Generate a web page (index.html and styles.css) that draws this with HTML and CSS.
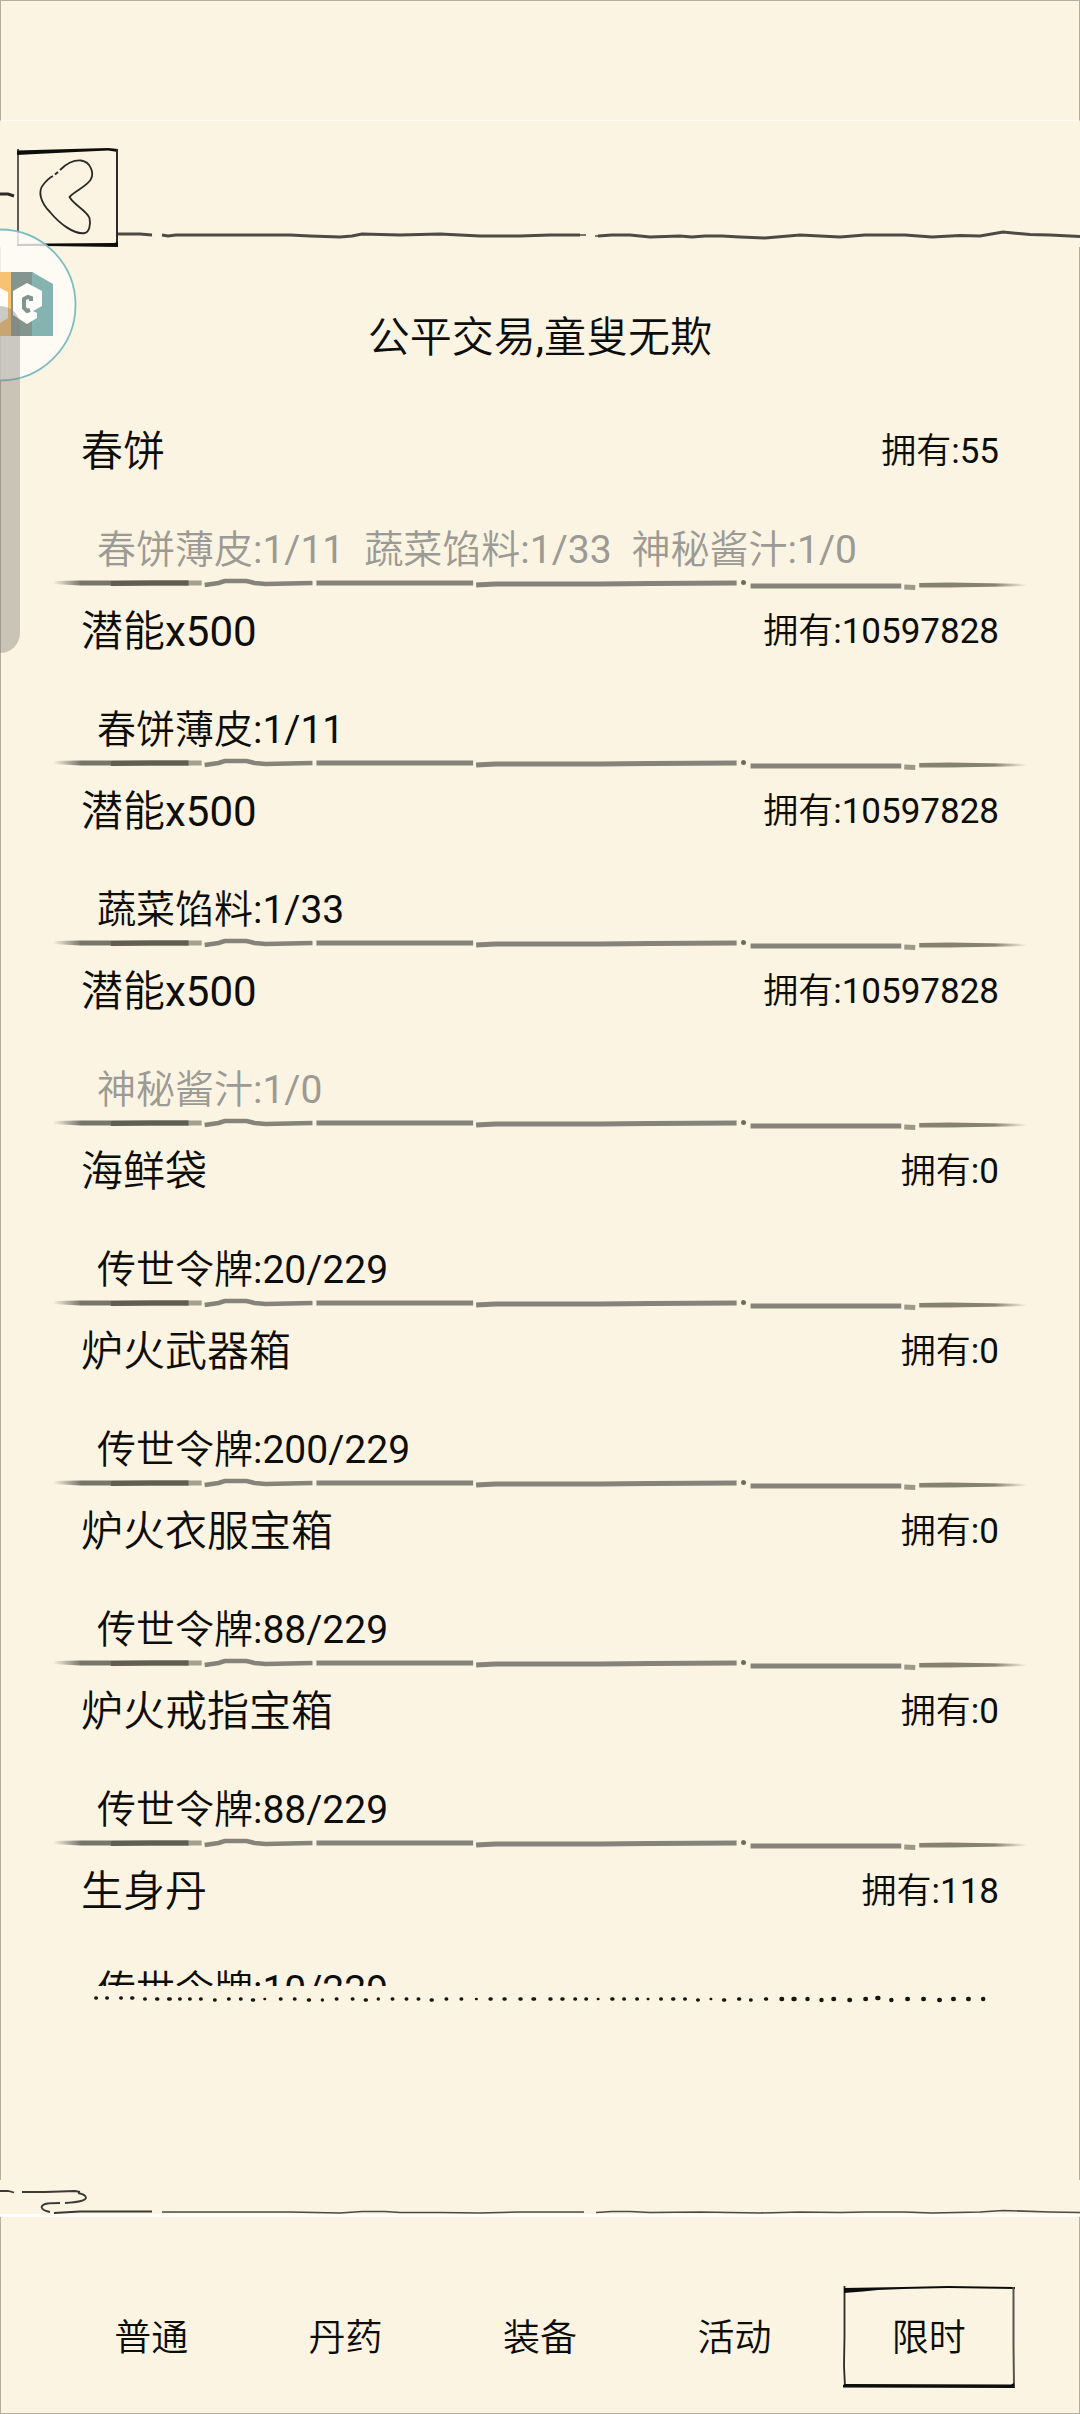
FILE: index.html
```
<!DOCTYPE html>
<html lang="zh-CN">
<head>
    <meta charset="UTF-8">
    <meta name="viewport" content="width=device-width, initial-scale=1.0">
    <title>交易</title>
    <link rel="stylesheet" href="styles.css">
</head>
<body>
    <!-- brush stroke shared by every row -->
    <svg class="defs" aria-hidden="true">
        <defs>
            <linearGradient id="fade-in" gradientUnits="userSpaceOnUse" x1="2" y1="0" x2="30" y2="0">
                <stop offset="0" stop-color="#77756a" stop-opacity="0"/>
                <stop offset="1" stop-color="#77756a"/>
            </linearGradient>
            <linearGradient id="fade-out" gradientUnits="userSpaceOnUse" x1="870" y1="0" x2="978" y2="0">
                <stop offset="0" stop-color="#85836f"/>
                <stop offset="0.7" stop-color="#85836f"/>
                <stop offset="1" stop-color="#85836f" stop-opacity="0"/>
            </linearGradient>
            <symbol id="stroke" viewBox="0 0 980 20" preserveAspectRatio="none">
                <g fill="none" stroke="#85837a" stroke-width="5">
                    <path d="M2 7L30 6.500H138V11.500H30L2 10z" fill="url(#fade-in)" stroke="none"/>
                    <path d="M60 9.500L100 9L138 9" stroke="#605e51"/>
                    <path d="M138 9H151" stroke="#a3a08d"/>
                    <path d="M154 11L168 9L174 7H196L204 9L215 10L262 9" stroke-width="4.500"/>
                    <path d="M266 9H423"/>
                    <path d="M426 11L445 10H550L600 9.500L687 9"/>
                    <path d="M701 12H852"/>
                    <path d="M855 13L866 13.500" stroke="#9c9985"/>
                    <path d="M870 9L900 8.500L978 10L978 12L900 13.500L870 13.500z" fill="url(#fade-out)" stroke="none"/>
                </g>
                <circle cx="694" cy="8.500" r="2.500" fill="#6d6b5c"/>
            </symbol>
        </defs>
    </svg>

    <div class="status-bar"></div>

    <header class="header">
        <svg class="header-stub" viewBox="0 0 16 99" aria-hidden="true">
            <path d="M0 46L8 46L14 48" fill="none" stroke="#2b2a26" stroke-width="3"/>
        </svg>
        <button class="back-btn" type="button" aria-label="返回">
            <svg viewBox="0 0 102 99" aria-hidden="true">
                <path d="M2 1L2 97" fill="none" stroke="#2b2a26" stroke-width="1.500"/>
                <path d="M1 2.500L55 1L92 0L102 1V4L92 2.500L60 4L30 5.500L1 7z" fill="#0d0d0b"/>
                <path d="M101 1L101 98" fill="none" stroke="#2b2a26" stroke-width="2"/>
                <path d="M1 96L30 95.500L98 95L102 94V99L30 98L1 98z" fill="#0d0d0b"/>
                <path d="M44 22C50 16 57 12 65 12.500C75 14 78 25 75 31C73 37 57 44 53.500 49C58 57 71 63 73.500 70C75 77 73 84 69 85C58 87 43 75 34 64C24 54 22 43 27 37C30 33 33 30 37 28" fill="none" stroke="#2b2a26" stroke-width="1.800"/>
                <path d="M39 26.500L42 24" stroke="#2b2a26" stroke-width="2"/>
            </svg>
        </button>
        <svg class="header-line" viewBox="118 0 962 99" preserveAspectRatio="none" aria-hidden="true">
            <g fill="none" stroke="#4c4b43" stroke-width="3">
                <path d="M118 86L140 86L152 87"/>
                <path d="M162 87L168 88L176 87H290L310 88L340 89L352 88L362 86L400 87L440 86L480 88L520 88L550 87H580"/>
                <path d="M578 87H586M595 88H600" stroke-width="1.500"/>
                <path d="M598 88L612 87H630L650 89L680 88L692 89L705 88H722L740 89L765 90L800 87L840 89L865 87H905L932 89L960 87.500L980 88L1003 84L1030 86.500L1050 87L1080 88.500"/>
            </g>
        </svg>
    </header>

    <main class="shop">
        <h1 class="shop-title">公平交易,童叟无欺</h1>

        <ul class="goods">
            <li class="item">
                <div class="item-head"><span class="name">春饼</span><span class="owned">拥有:55</span></div>
                <p class="cost lacking"><span>春饼薄皮:1/11</span><span>蔬菜馅料:1/33</span><span>神秘酱汁:1/0</span></p>
                <svg class="divider" aria-hidden="true"><use href="#stroke"/></svg>
            </li>
            <li class="item">
                <div class="item-head"><span class="name">潜能x500</span><span class="owned">拥有:10597828</span></div>
                <p class="cost"><span>春饼薄皮:1/11</span></p>
                <svg class="divider" aria-hidden="true"><use href="#stroke"/></svg>
            </li>
            <li class="item">
                <div class="item-head"><span class="name">潜能x500</span><span class="owned">拥有:10597828</span></div>
                <p class="cost"><span>蔬菜馅料:1/33</span></p>
                <svg class="divider" aria-hidden="true"><use href="#stroke"/></svg>
            </li>
            <li class="item">
                <div class="item-head"><span class="name">潜能x500</span><span class="owned">拥有:10597828</span></div>
                <p class="cost lacking"><span>神秘酱汁:1/0</span></p>
                <svg class="divider" aria-hidden="true"><use href="#stroke"/></svg>
            </li>
            <li class="item">
                <div class="item-head"><span class="name">海鲜袋</span><span class="owned">拥有:0</span></div>
                <p class="cost"><span>传世令牌:20/229</span></p>
                <svg class="divider" aria-hidden="true"><use href="#stroke"/></svg>
            </li>
            <li class="item">
                <div class="item-head"><span class="name">炉火武器箱</span><span class="owned">拥有:0</span></div>
                <p class="cost"><span>传世令牌:200/229</span></p>
                <svg class="divider" aria-hidden="true"><use href="#stroke"/></svg>
            </li>
            <li class="item">
                <div class="item-head"><span class="name">炉火衣服宝箱</span><span class="owned">拥有:0</span></div>
                <p class="cost"><span>传世令牌:88/229</span></p>
                <svg class="divider" aria-hidden="true"><use href="#stroke"/></svg>
            </li>
            <li class="item">
                <div class="item-head"><span class="name">炉火戒指宝箱</span><span class="owned">拥有:0</span></div>
                <p class="cost"><span>传世令牌:88/229</span></p>
                <svg class="divider" aria-hidden="true"><use href="#stroke"/></svg>
            </li>
            <li class="item">
                <div class="item-head"><span class="name">生身丹</span><span class="owned">拥有:118</span></div>
                <p class="cost"><span>传世令牌:10/229</span></p>
                <svg class="divider" aria-hidden="true"><use href="#stroke"/></svg>
            </li>
        </ul>

        <svg class="dots" viewBox="0 0 1080 26" preserveAspectRatio="none" aria-hidden="true">
            <g fill="none" stroke="#161613" stroke-linecap="round">
                <path stroke-width="3.500" d="M95 12h.5M106 12h.5M120 12h.5M131 12h1M144 13h.5M156 13h1M168 13h1.500M179 13h.5M189 13h.5M200 13h.5M214 14h.5M228 13h.5M240 13h.5M252 14h1M280 13h.5M294 13h.5M308 14h1M322 14h0M336 13h.5M352 13h.5M365 14h1M378 13h0M392 13h.5M406 13h.5M418 13h.5M431 14h1M446 13h.5M461 13h.5M490 13h1M504 13h1M520 13h1M533 13h1.500"/>
                <path stroke-width="2.500" d="M264 13h.5M476 13h.5M598 13h.5M648 13h.5M711 13h.5"/>
                <path stroke-width="3.500" d="M550 13h1M562 13h1M575 13h.5M586 13h.5M612 13h1M624 13h.5M637 13h.5M661 13h.5M673 13h1M685 13h.5M698 14h.5M724 14h1M739 13h1M751 14h.5M766 13h1"/>
                <path stroke-width="4.500" d="M782 13h.5M794 13h1M808 13h0M822 14h0M834 13h.5M850 14h.5M866 13h.5M878 12h1M892 14h0M908 13h.5M924 13h.5M940 14h.5M954 13h.5M969 13h.5M984 13h0"/>
            </g>
        </svg>
    </main>

    <div class="cloud" aria-hidden="true">
        <svg class="cloud-curl" viewBox="0 0 152 34">
            <g fill="none" stroke="#3a3933" stroke-width="1.800">
                <path d="M0 11L8 11L14 12.500"/>
                <path d="M22 12L45 12L75 11L80 12"/>
                <path d="M78 13C83 14 86 16 86 18C85 21 78 22 65 23"/>
                <path d="M60 23C50 23 43 23 41.500 27C42 29 44 31 50 32"/>
                <path d="M54 33L80 31.500L152 31.500"/>
            </g>
        </svg>
        <svg class="cloud-line" viewBox="152 0 928 34" preserveAspectRatio="none">
            <g fill="none" stroke="#4c4b43" stroke-width="1.600">
                <path d="M162 32H290L340 33L362 31.500H385L400 32.500H440L480 33L520 32H584"/>
                <path d="M596 32.500L612 31.500H630L650 32.500L700 32L760 33L800 32L840 32.500L865 32H905L932 33L980 32L1003 30.500L1050 32L1080 32.500"/>
            </g>
        </svg>
    </div>

    <nav class="tabs">
        <button class="tab" type="button"><span>普通</span></button>
        <button class="tab" type="button"><span>丹药</span></button>
        <button class="tab" type="button"><span>装备</span></button>
        <button class="tab" type="button"><span>活动</span></button>
        <button class="tab active" type="button" aria-current="page">
            <svg class="tab-frame" viewBox="0 0 172 103" preserveAspectRatio="none" aria-hidden="true">
                <path d="M1.500 0L1.500 50L1 80L2 101" fill="none" stroke="#2b2a26" stroke-width="1.800"/>
                <path d="M1 2L60 1L105 0L172 1V3L105 2L60 3L35 4L20 5.500L1 7z" fill="#0d0d0b"/>
                <path d="M170.500 1L170.500 60L171 100" fill="none" stroke="#55534a" stroke-width="2"/>
                <path d="M0 99L2 98L168 98.500L171 97L172 102L0 101.500z" fill="#0d0d0b"/>
            </svg>
            <span>限时</span>
        </button>
    </nav>

    <!-- floating assist ball and edge handle -->
    <button class="float-ball" type="button" aria-label="悬浮球">
        <svg viewBox="0 0 77 154" aria-hidden="true">
            <circle cx="0" cy="77" r="75.500" fill="#fffdfa" fill-opacity="0.800" stroke="#7fbcc0" stroke-width="1.800"/>
            <path d="M0 44H11V108H0z" fill="#f8c273"/>
            <path d="M11 44H33V108H11z" fill="#84958f"/>
            <path d="M32 44L53 56V108H32z" fill="#85b3b0"/>
            <path d="M0 60L8 64V90L0 95z" fill="#fffdfa"/>
            <path d="M27 55L42 63V78L33 83L37 85V90L27 96L13 87V63z" fill="#fffdfa"/>
            <path d="M31 73V70L28 69L24 71V80L27 83L30 82" fill="none" stroke="#84958f" stroke-width="4"/>
        </svg>
    </button>
    <div class="edge-handle"></div>
</body>
</html>
```
FILE: styles.css
```
* {
    margin: 0;
    padding: 0;
    box-sizing: border-box;
}

body {
    display: flex;
    flex-direction: column;
    position: relative;
    height: 100vh;
    overflow: hidden;
    font-family: Roboto, "Noto Sans CJK SC DemiLight", "Noto Sans CJK SC", sans-serif;
    background-color: #fbf4e2;
    color: #0d0d0b;
}

button {
    border: none;
    background: none;
    color: inherit;
    font: inherit;
    cursor: pointer;
}

svg {
    display: block;
}

.defs {
    position: absolute;
    width: 0;
    height: 0;
}

.status-bar {
    height: 121px;
    flex-shrink: 0;
    border: 1px solid #b5af9f;
    border-bottom-color: #fffaf0;
}

/* header */
.header {
    display: flex;
    flex-shrink: 0;
    padding-top: 27px;
}

.header-stub {
    width: 16px;
    height: 99px;
}

.back-btn {
    width: 102px;
    height: 99px;
}

.header-line {
    flex: 1;
    min-width: 0;
    height: 99px;
}

/* goods list */
.shop {
    display: flex;
    flex-direction: column;
    flex: 1;
    min-height: 0;
    padding-bottom: 168px;
    border-left: 1px solid #b5af9f;
    border-right: 1px solid #b5af9f;
}

.shop-title {
    padding: 61px 0 46px;
    font-size: 42px;
    font-weight: 400;
    line-height: 60px;
    text-align: center;
}

.goods {
    flex: 1;
    min-height: 0;
    padding: 0 50px;
    overflow-y: auto;
    scrollbar-width: none;
    list-style: none;
}

.item {
    padding-top: 8px;
}

.item-head {
    display: flex;
    justify-content: space-between;
    align-items: center;
    padding: 0 30px;
    line-height: 60px;
}

.name {
    font-size: 42px;
}

.owned {
    font-size: 35px;
}

.cost {
    display: flex;
    gap: 20px;
    margin-top: 44px;
    padding-left: 46px;
    font-size: 39px;
    line-height: 48px;
    white-space: nowrap;
}

.lacking {
    color: #9b9a94;
}

.divider {
    width: 100%;
    height: 20px;
}

.dots {
    width: 100%;
    height: 26px;
    flex-shrink: 0;
}

/* bottom */
.cloud {
    display: flex;
    flex-shrink: 0;
    border-bottom: 3px solid #fffefa;
}

.cloud-curl {
    width: 152px;
    height: 34px;
}

.cloud-line {
    flex: 1;
    min-width: 0;
    height: 34px;
}

.tabs {
    display: flex;
    flex-shrink: 0;
    padding: 69px 53px 24px;
    border: 1px solid #b5af9f;
    border-top: none;
}

.tab {
    display: grid;
    place-items: center;
    flex: 1;
    height: 103px;
    font-size: 37px;
}

.tab > * {
    grid-area: 1 / 1;
}

.tab span {
    padding-bottom: 5px;
}

.tab-frame {
    width: 172px;
    height: 103px;
}

/* overlays */
.float-ball {
    position: absolute;
    top: 228px;
    left: 0;
    width: 77px;
    height: 154px;
}

.edge-handle {
    position: absolute;
    top: 306px;
    left: 0;
    width: 20px;
    height: 347px;
    border-radius: 0 20px 20px 0;
    background-color: rgba(128, 125, 118, 0.4);
}
```
